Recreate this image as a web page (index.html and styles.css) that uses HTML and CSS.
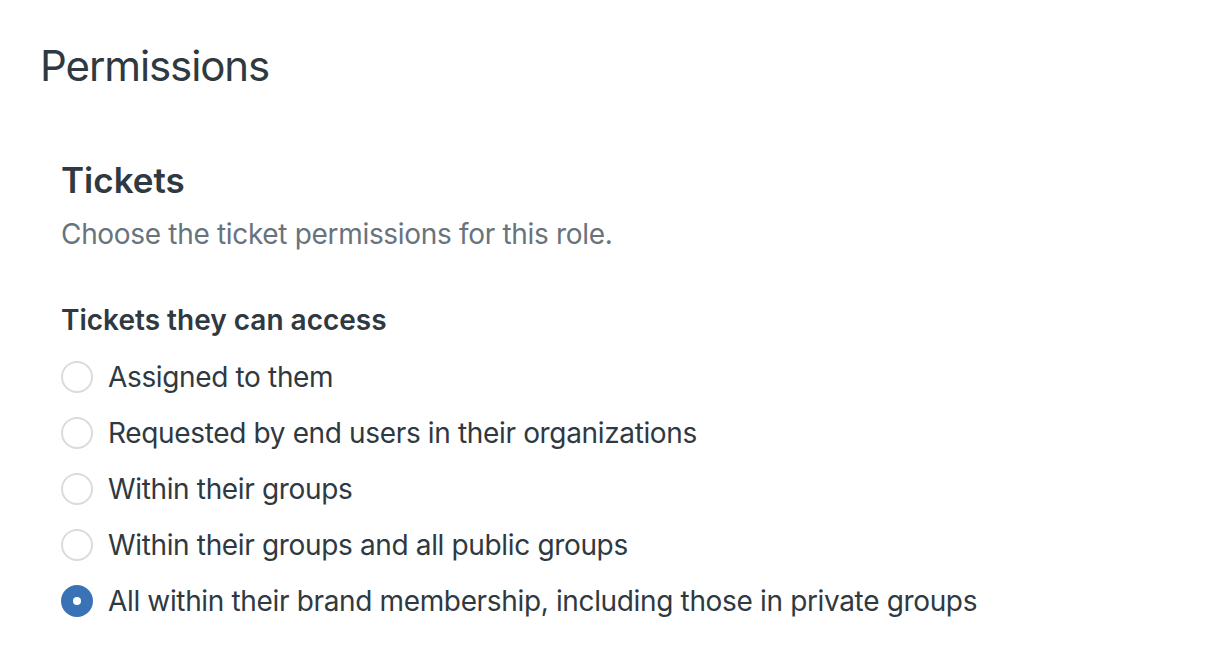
FILE: index.html
```html
<!DOCTYPE html>
<html lang="en">
<head>
<meta charset="utf-8">
<title>Permissions</title>
<link rel="stylesheet" href="styles.css">
</head>
<body>
<main class="page">
  <h1 class="page-title">Permissions</h1>
  <section class="section">
    <h2 class="section-title">Tickets</h2>
    <p class="section-hint">Choose the ticket permissions for this role.</p>
    <div class="field" role="radiogroup" aria-labelledby="access-label">
      <div class="field-label" id="access-label">Tickets they can access</div>
      <label class="radio"><input type="radio" name="access"><span class="radio-mark"></span><span class="radio-text">Assigned to them</span></label>
      <label class="radio"><input type="radio" name="access"><span class="radio-mark"></span><span class="radio-text">Requested by end users in their organizations</span></label>
      <label class="radio"><input type="radio" name="access"><span class="radio-mark"></span><span class="radio-text">Within their groups</span></label>
      <label class="radio"><input type="radio" name="access"><span class="radio-mark"></span><span class="radio-text">Within their groups and all public groups</span></label>
      <label class="radio"><input type="radio" name="access" checked><span class="radio-mark"></span><span class="radio-text">All within their brand membership, including those in private groups</span></label>
    </div>
  </section>
</main>
</body>
</html>
```
FILE: styles.css
```css
* { box-sizing: border-box; }
html, body { margin: 0; padding: 0; background: #fff; }
body {
  font-family: Inter, "Noto Sans", sans-serif;
  color: #2f3941;
}
.page { padding: 38px 40px 0 40px; }
.page-title {
  margin: 0;
  font-size: 42px;
  font-weight: 400;
  line-height: 56px;
  letter-spacing: -1.1px;
}
.section { padding: 0 0 0 21px; margin-top: 64px; }
.section-title {
  margin: 0;
  font-size: 35px;
  font-weight: 600;
  line-height: 44px;
}
.section-hint {
  margin: 12px 0 0 0;
  font-size: 28px;
  line-height: 40px;
  letter-spacing: -0.32px;
  color: #68737d;
}
.field { margin-top: 46px; }
.field-label {
  font-size: 28px;
  font-weight: 600;
  line-height: 40px;
  margin-bottom: 9px;
}
.radio {
  display: flex;
  align-items: center;
  gap: 15px;
  height: 56px;
  font-size: 28px;
  letter-spacing: -0.35px;
  cursor: pointer;
}
.radio input { position: absolute; opacity: 0; width: 0; height: 0; }
.radio-mark {
  flex: none;
  width: 32px;
  height: 32px;
  border-radius: 50%;
  border: 2px solid #d8dcde;
  background: #fff;
  display: flex;
  align-items: center;
  justify-content: center;
}
.radio input:checked + .radio-mark {
  background: #3a72b6;
  border-color: #3a72b6;
}
.radio input:checked + .radio-mark::after {
  content: "";
  width: 8px;
  height: 8px;
  border-radius: 50%;
  background: #fff;
}
.radio-text { line-height: 40px; }
```
